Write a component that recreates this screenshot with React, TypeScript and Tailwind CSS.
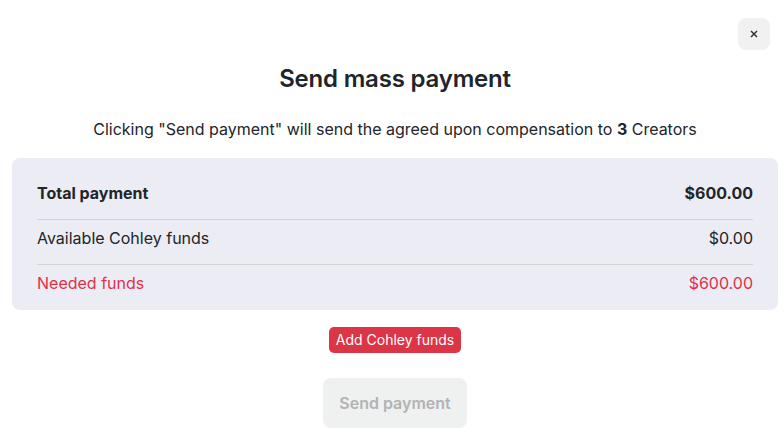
export default function App() {
  return (
    <div
      className="relative w-[784px] h-[432px] bg-white overflow-hidden text-[#212529]"
      style={{ fontFamily: "Inter, 'Noto Sans', sans-serif" }}
    >
      <button className="absolute top-[18px] left-[738px] w-8 h-8 rounded-lg bg-[#f1f1f2] flex items-center justify-center text-[#333]">
        <svg width="10" height="10" viewBox="0 0 10 10" fill="none" stroke="currentColor" strokeWidth="1.5">
          <path d="M2 2l6 6M8 2l-6 6" />
        </svg>
      </button>

      <div className="pl-3 pr-1.5 pt-[63px] flex flex-col items-center">
        <h1 className="text-[24px] leading-8 font-semibold tracking-[-0.2px]">Send mass payment</h1>
        <p className="mt-[22px] text-[16px] leading-6">
          Clicking "Send payment" will send the agreed upon compensation to <b className="font-bold">3</b> Creators
        </p>

        <div className="mt-[17px] w-full rounded-lg bg-[#ececf4] px-[25px] pt-[17px] pb-px divide-y divide-[#d3d3d8] text-[16px] leading-6">
          <div className="flex justify-between pt-[6px] pb-[14px] font-bold">
            <span>Total payment</span>
            <span>$600.00</span>
          </div>
          <div className="flex justify-between pt-[6px] pb-[14px]">
            <span>Available Cohley funds</span>
            <span>$0.00</span>
          </div>
          <div className="flex justify-between pt-[6px] pb-[14px] text-[#e0304a]">
            <span>Needed funds</span>
            <span>$600.00</span>
          </div>
        </div>

        <button className="mt-[17px] h-[26px] px-[7px] rounded-[5px] bg-[#dc3545] text-white text-[14px] leading-5">
          Add Cohley funds
        </button>

        <button className="mt-[25px] h-[50px] w-[144px] rounded-lg bg-[#eff0f0] text-[#b3b3b3] text-[16px] font-semibold">
          Send payment
        </button>
      </div>
    </div>
  );
}
